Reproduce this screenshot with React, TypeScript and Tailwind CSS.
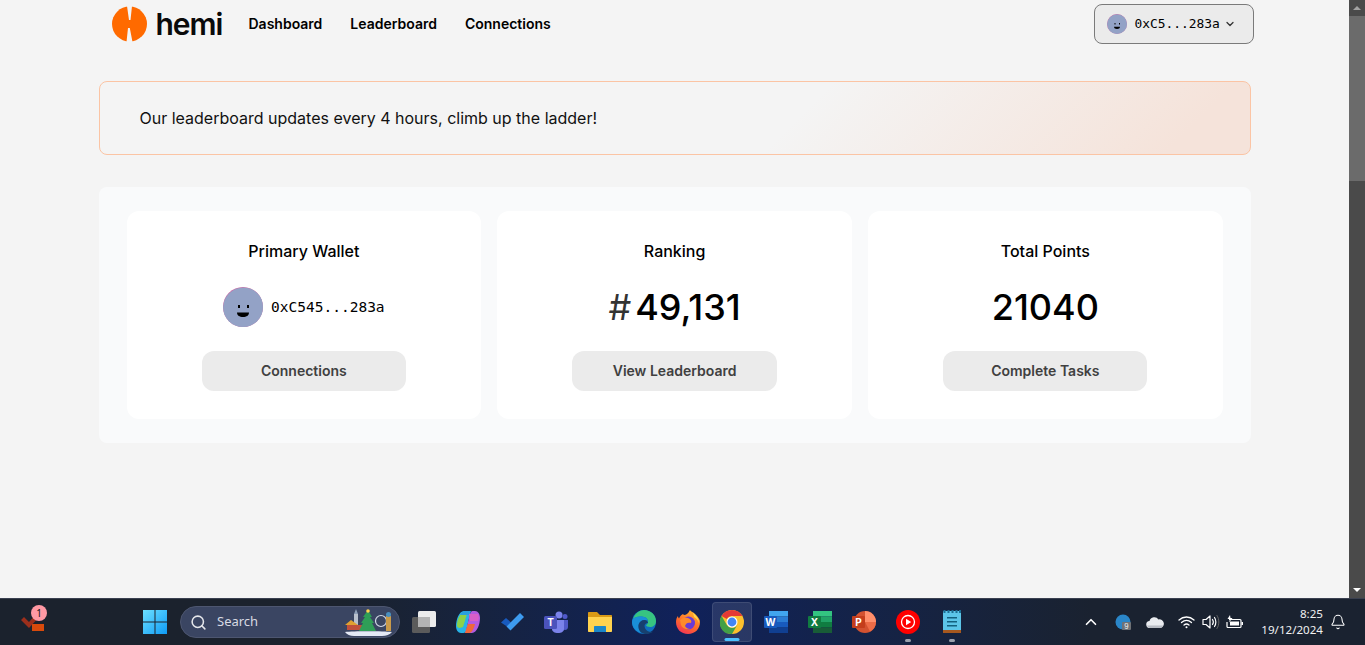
import { ChevronDown, ChevronUp, Search, Bell } from 'lucide-react';
import type { ReactNode } from 'react';

const Face = ({ size }: { size: number }) => (
    <svg width={size} height={size} viewBox="0 0 40 40" className="shrink-0">
        <defs>
            <clipPath id={`c${size}`}><circle cx="20" cy="20" r="20" /></clipPath>
        </defs>
        <g clipPath={`url(#c${size})`}>
            <rect width="40" height="40" fill="#c76fa8" />
            <circle cx="20.5" cy="21" r="20.5" fill="#93a2c6" />
        </g>
        <rect x="15" y="18" width="2" height="3" fill="#000" />
        <rect x="24" y="18" width="2" height="3" fill="#000" />
        <path d="M14 25.500h12c0 3-2.500 4.500-6 4.500s-6-1.500-6-4.500z" fill="#000" />
    </svg>
);

const Logo = () => (
    <svg width="36" height="36" viewBox="0 0 36 36">
        <circle cx="17.500" cy="18" r="17.500" fill="#ff6a00" />
        <path d="M15 0h5l-1.500 14h-1.500zM16 22h1.800L20.500 36h-6z" fill="#f4f4f4" />
    </svg>
);

const Card = ({ title, action, children }: { title: string; action: string; children: ReactNode }) => (
    <div className="bg-white rounded-xl h-[208px] flex flex-col items-center pt-[29px]">
        <h3 className="text-base font-medium leading-[22px] text-black">{title}</h3>
        <div className="h-[40px] mt-[25px] flex items-center justify-center">{children}</div>
        <button className="mt-[24px] w-[204.300px] h-[40px] rounded-xl bg-[#ebebeb] text-sm font-semibold text-[#404040]">
            {action}
        </button>
    </div>
);

const Slot = ({ children, active, dot }: { children: ReactNode; active?: boolean; dot?: boolean }) => (
    <div className={`relative w-[40px] h-[40px] mx-[2px] flex items-center justify-center rounded ${active ? 'bg-white/10 border border-white/10' : ''}`}>
        {children}
        {dot && <span className={`absolute bottom-0 left-1/2 -translate-x-1/2 h-[3px] rounded-full ${active ? 'w-[15px] bg-[#4cc2ff]' : 'w-[6px] bg-[#9aa0ad]'}`} />}
    </div>
);

const WindowsIcon = () => (
    <svg width="24" height="24" viewBox="0 0 24 24">
        <defs>
            <linearGradient id="win" x1="0" y1="0" x2="1" y2="1">
                <stop offset="0" stopColor="#6ce0ff" />
                <stop offset="1" stopColor="#0f9bf5" />
            </linearGradient>
        </defs>
        <path d="M0 0h11.500v11.500H0zM12.500 0H24v11.500H12.500zM0 12.500h11.500V24H0zM12.500 12.500H24V24H12.500z" fill="url(#win)" />
    </svg>
);

const TaskView = () => (
    <svg width="24" height="24" viewBox="0 0 24 24">
        <rect x="0" y="7" width="18" height="16" rx="1.500" fill="#5b5b5b" />
        <rect x="6" y="1" width="18" height="16" rx="1.500" fill="#ececec" />
        <rect x="6" y="7" width="12" height="10" fill="#b4b4b4" />
    </svg>
);

const Copilot = () => (
    <svg width="24" height="24" viewBox="0 0 24 24">
        <path d="M8 1h7l-1 3-4 17c-.4 1-1 2-2.500 2H5C2 23 0 20 0 16 0 10 3 1 8 1z" fill="#27b3e8" />
        <path d="M1 15c0-4 2-9 4-11h6L7 17c-2 1-6 2-6-2z" fill="#8cd14a" />
        <path d="M4 5c1-2 3-4 5-4h5l-1 4z" fill="#2a9fe0" />
        <path d="M16 23H9l1-3 4-16c.4-1 1-3 2.500-3H19c3 0 5 3 5 7 0 6-3 15-8 15z" fill="#b35be0" />
        <path d="M9 23l3-9h7c-1 4-3 9-6 9z" fill="#f0683a" />
        <path d="M13 4h9c1 2 1 5 0 7h-8z" fill="#d85fc8" />
    </svg>
);

const Todo = () => (
    <svg width="24" height="24" viewBox="0 0 24 24">
        <path d="M1 12.500l5-4.500 5 4.500-4 4z" fill="#185abd" />
        <path d="M6.500 16.500L20 3l4 4L10.500 20.500z" fill="#3d9bf0" />
    </svg>
);

const Teams = () => (
    <svg width="24" height="24" viewBox="0 0 24 24">
        <circle cx="15" cy="5" r="3.500" fill="#7b83eb" />
        <circle cx="21" cy="6.500" r="2.500" fill="#5059c9" />
        <path d="M18 10h6v7c0 2-1.500 3-3 3s-3-1-3-3z" fill="#5059c9" />
        <path d="M8 10h12v9c0 2.500-2.500 4-6 4s-6-1.500-6-4z" fill="#7b83eb" />
        <rect x="0" y="6" width="13" height="13" rx="1.500" fill="#4b53bc" />
        <text x="6.500" y="16" textAnchor="middle" fontSize="10" fontWeight="700" fill="#fff" fontFamily="Inter">T</text>
    </svg>
);

const Folder = () => (
    <svg width="24" height="24" viewBox="0 0 24 24">
        <path d="M0 3c0-.6.4-1 1-1h8l3 3h11c.6 0 1 .4 1 1v3H0z" fill="#d99a16" />
        <path d="M0 7h24v14c0 .6-.4 1-1 1H1c-.6 0-1-.4-1-1z" fill="#ffd34f" />
        <path d="M6 22v-5c0-.6.4-1 1-1h10c.6 0 1 .4 1 1v5z" fill="#1b87c9" />
    </svg>
);

const Edge = () => (
    <svg width="24" height="24" viewBox="0 0 24 24">
        <circle cx="12" cy="12" r="12" fill="#0f6fc0" />
        <path d="M1 9C3 3 8 0 12 0c7 0 12 5 12 11 0 4-3 6-6 6-2 0-4-1-4-2 3-1 3-7-2-8-5-1-9 0-11 2z" fill="#37c481" />
        <path d="M1 9c2-2 6-3 11-2 2 .4 3 1.500 3.500 3H13c-3 0-6 2-6.500 5-.4 3 .5 6 3 8C4 22 0 17 0 12c0-1 .4-2 1-3z" fill="#1a8fd8" />
        <path d="M13 24c-5-1-7-5-6.500-9 .5-3 3-5 6-5 2 0 3.500 1.500 3.500 3-5 0-4 6-.5 8 2 1 4.500 1 6 .5-2 1.500-5 3-8.500 2.500z" fill="#17406f" />
    </svg>
);

const Firefox = () => (
    <svg width="24" height="24" viewBox="0 0 24 24">
        <defs>
            <linearGradient id="fx" x1="0.7" y1="0" x2="0.2" y2="1">
                <stop offset="0" stopColor="#ffb52e" />
                <stop offset="0.55" stopColor="#ff6a2a" />
                <stop offset="1" stopColor="#f0305a" />
            </linearGradient>
        </defs>
        <path d="M12 24C5 24 0 19 0 12c0-3 1-5 2-6 0 1 .5 2 1 2.500C4 6 6 4 8 4c-1 1-1 1 0 1 2 0 4-1 6-5 1 2 4 2 7 6 2 2.500 3 4 3 6 0 7-5 12-12 12z" fill="url(#fx)" />
        <circle cx="12.500" cy="13" r="6.500" fill="#6a3bd6" />
        <path d="M4 10c3-3 6-3 8-2 3 1 4 3 3 5-3-1-5 0-6 3 1 2 3 3 5 3-4 1-8-1-9-4-.5-2-.5-3-1-5z" fill="#ff8a2a" />
        <path d="M17 3c3 2 6 6 6 10-1-3-3-5-5-6 0-1-.5-2-1-4z" fill="#ffd84a" />
    </svg>
);

const Chrome = () => (
    <svg width="24" height="24" viewBox="0 0 24 24">
        <circle cx="12" cy="12" r="12" fill="#fbc02d" />
        <path d="M12 0a12 12 0 0 1 10.400 6H12a6 6 0 0 0-5.200 3L1.600 6A12 12 0 0 1 12 0z" fill="#e53935" />
        <path d="M1.600 6l5.200 9A6 6 0 0 0 12 18l-5.200 5.500A12 12 0 0 1 1.600 6z" fill="#43a047" />
        <path d="M6.800 15A6 6 0 0 0 17.200 15L12 24A12 12 0 0 1 6.800 23z" fill="#43a047" />
        <circle cx="12" cy="12" r="5.500" fill="#fff" />
        <circle cx="12" cy="12" r="4.400" fill="#4285f4" />
    </svg>
);

const Office = ({ letter, shades, tile }: { letter: string; shades: string[]; tile: string }) => (
    <svg width="24" height="24" viewBox="0 0 24 24">
        <rect x="5" y="1" width="19" height="5.500" fill={shades[0]} />
        <rect x="5" y="6.500" width="19" height="5.500" fill={shades[1]} />
        <rect x="5" y="12" width="19" height="5.500" fill={shades[2]} />
        <rect x="5" y="17.500" width="19" height="5.500" fill={shades[3]} />
        <rect x="0" y="6" width="13" height="12" rx="1" fill={tile} />
        <text x="6.500" y="15.500" textAnchor="middle" fontSize="10" fontWeight="700" fill="#fff" fontFamily="Inter">{letter}</text>
    </svg>
);

const PowerPoint = () => (
    <svg width="24" height="24" viewBox="0 0 24 24">
        <circle cx="13" cy="12" r="11" fill="#d35230" />
        <path d="M13 1a11 11 0 0 1 11 11H13z" fill="#ff8f6b" />
        <path d="M13 12h11a11 11 0 0 1-6 9.500z" fill="#ed6c47" />
        <rect x="0" y="6" width="13" height="12" rx="1" fill="#c43e1c" />
        <text x="6.500" y="15.500" textAnchor="middle" fontSize="10" fontWeight="700" fill="#fff" fontFamily="Inter">P</text>
    </svg>
);

const YtMusic = () => (
    <svg width="24" height="24" viewBox="0 0 24 24">
        <circle cx="12" cy="12" r="12" fill="#ff0000" />
        <circle cx="12" cy="12" r="6.500" fill="none" stroke="#fff" strokeWidth="1.300" />
        <path d="M10 8.800l5.200 3.200-5.200 3.200z" fill="#fff" />
    </svg>
);

const Notepad = () => (
    <svg width="24" height="24" viewBox="0 0 24 24">
        <rect x="3" y="1" width="18" height="21" rx="1" fill="#5cc5e8" />
        <rect x="3" y="20" width="18" height="3" fill="#a5581f" />
        <path d="M3.500 0h2v3h-2zM7.500 0h2v3h-2zM11.500 0h2v3h-2zM15.500 0h2v3h-2zM19 0h2v3h-2z" fill="#1c6f94" />
        <path d="M7 7h10v1.500H7zM7 11h10v1.500H7zM7 15h10v1.500H7z" fill="#12617f" />
    </svg>
);

const ClockIcon = () => (
    <svg width="16" height="16" viewBox="0 0 16 16">
        <circle cx="8" cy="8" r="7.500" fill="#2a86c8" />
        <rect x="7" y="8" width="9" height="8" rx="1" fill="#6f7276" />
        <text x="11.500" y="15" textAnchor="middle" fontSize="7" fill="#f2f2f2" fontFamily="Inter">9</text>
    </svg>
);

const Cloud = () => (
    <svg width="18" height="12" viewBox="0 0 18 12">
        <path d="M4 12a3.500 3.500 0 0 1-.5-7A5 5 0 0 1 12.500 3.500 4.200 4.200 0 0 1 14.500 12z" fill="#e9ebef" />
        <path d="M1 9.500h16c-.4 1.500-1.500 2.500-2.500 2.500H4c-1.500 0-2.500-1-3-2.500z" fill="#b8bcc4" />
    </svg>
);

const WifiGlyph = () => (
    <svg width="17" height="14" viewBox="0 0 17 14" fill="none" stroke="#fff" strokeWidth="1.300" strokeLinecap="round">
        <path d="M1 5c4.500-4 10.500-4 15 0" />
        <path d="M3.500 7.500c3-2.600 7-2.600 10 0" />
        <path d="M6 10c1.600-1.300 3.400-1.300 5 0" />
        <circle cx="8.500" cy="12.300" r="1" fill="#fff" stroke="none" />
    </svg>
);

const VolumeGlyph = () => (
    <svg width="18" height="16" viewBox="0 0 18 16" fill="none" strokeLinecap="round">
        <path d="M1 5.500h3L8 2v12l-4-3.500H1z" stroke="#fff" strokeWidth="1.200" strokeLinejoin="round" />
        <path d="M10.500 5.500c1 1.500 1 3.500 0 5M12.500 3.500c1.800 2.500 1.800 6.500 0 9" stroke="#fff" strokeWidth="1.200" />
        <path d="M15 1.500c2.500 3.500 2.500 9.500 0 13" stroke="#666" strokeWidth="1" />
    </svg>
);

const BatteryGlyph = () => (
    <svg width="17" height="15" viewBox="0 0 17 15" fill="none">
        <path d="M3 4.500h11a1 1 0 0 1 1 1v6a1 1 0 0 1-1 1H2a1 1 0 0 1-1-1V7" stroke="#fff" strokeWidth="1.200" />
        <rect x="4" y="6.500" width="9" height="4" fill="#fff" />
        <rect x="15.500" y="7" width="1.500" height="3" fill="#fff" />
        <path d="M4 0L1.500 4h2.500L3 7.500 6.500 3H4.500z" fill="#fff" />
    </svg>
);

const SearchScene = () => (
    <svg width="48" height="28" viewBox="0 0 48 28">
        <path d="M0 24c8-1 38-1 47 0-2 2.500-6 4-10 4H9c-4 0-7-1.500-9-4z" fill="#e4e9f5" />
        <rect x="9" y="6" width="4" height="12" fill="#b8c0cc" />
        <path d="M9 6l2-5 2 5z" fill="#8fa0b8" />
        <path d="M0 17l6-5 7 5z" fill="#e0a030" />
        <rect x="2" y="17" width="16" height="5" fill="#c0503b" />
        <path d="M23 2l4 7h-2l4 6h-2l4 8H14l4-8h-2l4-6h-2z" fill="#2f9e57" />
        <circle cx="23" cy="3" r="1.800" fill="#ffd34f" />
        <circle cx="36" cy="13" r="5.500" fill="none" stroke="#d4dbe8" strokeWidth="1.200" />
        <rect x="41" y="8" width="5" height="15" fill="#c99a4a" />
        <circle cx="43.500" cy="6.500" r="2.500" fill="#4a90c0" />
    </svg>
);

const App = () => {
    return (
        <div className="h-[645px] w-[1365px] flex flex-col overflow-hidden bg-[#f4f4f4] font-['Inter',sans-serif]">
            <div className="flex-1 min-h-0 flex">
                <main className="flex-1 min-w-0">
                    <div className="w-[1152px] mx-auto">
                        {/* Nav */}
                        <header className="h-[48px] flex items-center justify-between pl-[13px] -mr-[3px]">
                            <div className="flex items-center">
                                <Logo />
                                <span className="ml-[8px] text-[30px] leading-none font-semibold tracking-[-1px] text-[#0a0a0a]">hemi</span>
                                <nav className="ml-[26px] flex items-center gap-[28px] text-sm font-semibold text-black">
                                    <a>Dashboard</a>
                                    <a>Leaderboard</a>
                                    <a>Connections</a>
                                </nav>
                            </div>
                            <button className="w-[160px] h-[40px] rounded-lg border border-[#7a7a7a] bg-[#ebebeb] flex items-center pl-[12px]">
                                <Face size={20} />
                                <span className="ml-[8px] text-[12.900px] font-['DejaVu_Sans_Mono',monospace] text-black">0xC5...283a</span>
                                <ChevronDown className="ml-[4px] w-3 h-3 text-[#333]" strokeWidth={2.5} />
                            </button>
                        </header>

                        {/* Banner */}
                        <div className="mt-[33px] h-[74px] rounded-lg border border-[#fbc4a4] bg-[linear-gradient(135deg,#f4f4f4_60%,#f5e3da_93%)] flex items-center pl-[40px]">
                            <p className="text-base text-[#111]">Our leaderboard updates every 4 hours, climb up the ladder!</p>
                        </div>

                        {/* Stats */}
                        <section className="mt-[32px] rounded-lg bg-[#f9fafb] pl-[28px] pr-[27.800px] py-[24px] grid grid-cols-3 gap-[16px]">
                            <Card title="Primary Wallet" action="Connections">
                                <Face size={40} />
                                <span className="ml-[8px] pt-[2px] text-[14.500px] font-['DejaVu_Sans_Mono',monospace] text-black">0xC545...283a</span>
                            </Card>
                            <Card title="Ranking" action="View Leaderboard">
                                <span className="text-[36px] leading-none text-[#333] mr-[4px]">#</span>
                                <span className="text-[36px] leading-none font-medium text-black">49,131</span>
                            </Card>
                            <Card title="Total Points" action="Complete Tasks">
                                <span className="text-[36px] leading-none font-medium text-black">21040</span>
                            </Card>
                        </section>
                    </div>
                </main>

                {/* Scrollbar */}
                <div className="w-[16px] bg-[#4a4a4a] flex flex-col">
                    <div className="h-[16px] flex items-center justify-center">
                        <span className="w-0 h-0 border-x-[4px] border-x-transparent border-b-[4px] border-b-[#a3a3a3]" />
                    </div>
                    <div className="h-[165px] bg-[#6b6b6b]" />
                    <div className="flex-1" />
                    <div className="h-[16px] flex items-center justify-center">
                        <span className="w-0 h-0 border-x-[4px] border-x-transparent border-t-[4px] border-t-white" />
                    </div>
                </div>
            </div>

            {/* Taskbar */}
            <footer className="h-[47px] border-t border-[#3a4050] flex items-center bg-gradient-to-r from-[#1b222d] from-25% via-[#10215a] via-50% to-[#1a2230] to-80% text-white font-['Noto_Sans',sans-serif]">
                <div className="relative w-[66px] h-full flex items-center justify-center">
                    <svg width="24" height="20" viewBox="0 0 24 20">
                        <path d="M11 12h12v7H11z" fill="#d84a0c" />
                        <path d="M0 8l3-3 5 5 8-9 3 3-11 12z" fill="#9c2f1c" />
                    </svg>
                    <span className="absolute left-[31px] top-[6px] w-[16px] h-[16px] rounded-full bg-[#ff99a4] text-[#111] text-[10px] leading-[16px] text-center">1</span>
                </div>
                <div className="ml-[67px] w-[44px] flex justify-center"><WindowsIcon /></div>
                <div className="ml-[3px] w-[220px] h-[32px] rounded-full bg-[#3a4562] border border-[#4d5670] flex items-center pl-[9px] pr-[6px]">
                    <Search className="w-[17px] h-[17px] text-[#e5e7eb]" strokeWidth={2.2} />
                    <span className="ml-[10px] text-[13px] text-[#d7dae2]">Search</span>
                    <div className="ml-auto"><SearchScene /></div>
                </div>
                <div className="ml-[2px] flex items-center">
                    <Slot><TaskView /></Slot>
                    <Slot><Copilot /></Slot>
                    <Slot><Todo /></Slot>
                    <Slot><Teams /></Slot>
                    <Slot><Folder /></Slot>
                    <Slot><Edge /></Slot>
                    <Slot><Firefox /></Slot>
                    <Slot active dot><Chrome /></Slot>
                    <Slot><Office letter="W" tile="#185abd" shades={['#41a5ee', '#2b7cd3', '#185abd', '#103f91']} /></Slot>
                    <Slot><Office letter="X" tile="#107c41" shades={['#33c481', '#21a366', '#107c41', '#185c37']} /></Slot>
                    <Slot><PowerPoint /></Slot>
                    <Slot dot><YtMusic /></Slot>
                    <Slot dot><Notepad /></Slot>
                </div>
                <div className="ml-auto flex items-center pr-[19px]">
                    <ChevronUp className="w-[18px] h-[18px] text-white mr-[15px]" strokeWidth={2.2} />
                    <div className="mr-[15px]"><ClockIcon /></div>
                    <div className="mr-[14px]"><Cloud /></div>
                    <div className="mr-[7px]"><WifiGlyph /></div>
                    <div className="mr-[6px]"><VolumeGlyph /></div>
                    <div className="mr-[18px]"><BatteryGlyph /></div>
                    <div className="text-right text-[11.600px] leading-[16px] text-[#f0f0f0]">
                        <div>8:25</div>
                        <div>19/12/2024</div>
                    </div>
                    <Bell className="ml-[7px] w-[16px] h-[16px]" strokeWidth={1.6} />
                </div>
            </footer>
        </div>
    );
};

export default App;
